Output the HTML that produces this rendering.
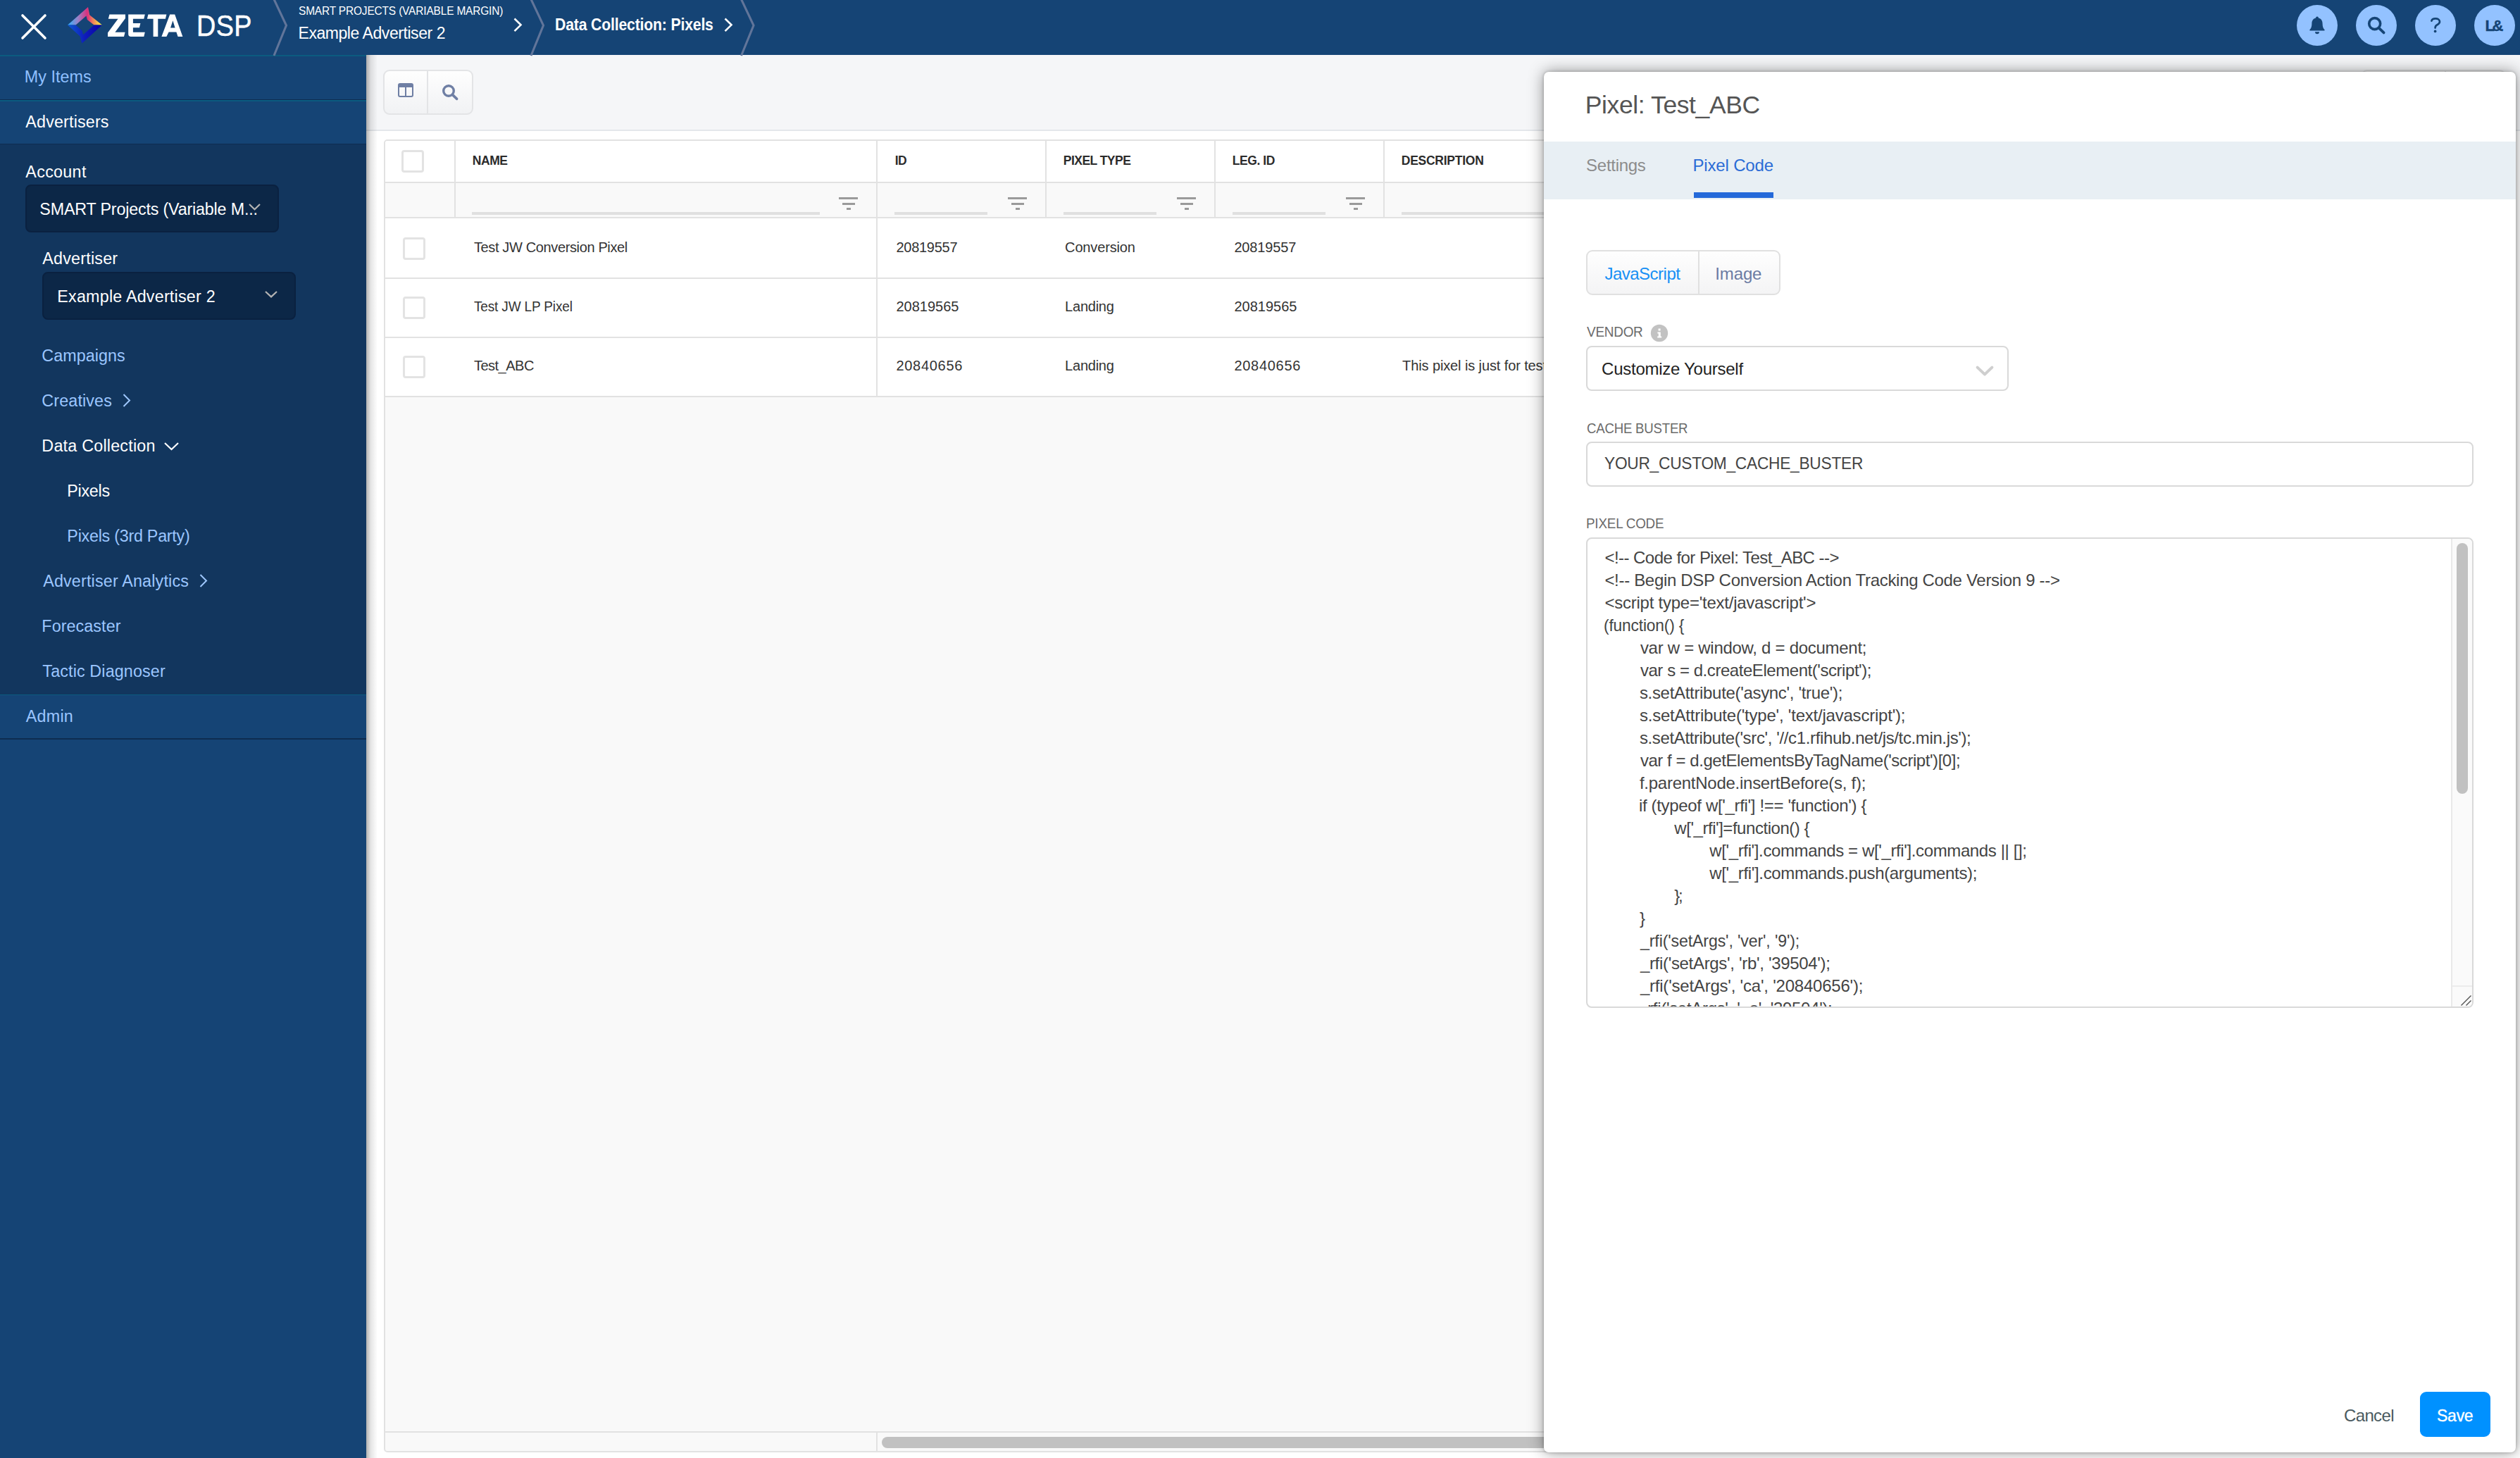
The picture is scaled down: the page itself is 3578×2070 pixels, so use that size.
<!DOCTYPE html>
<html><head><meta charset="utf-8"><title>Zeta DSP - Data Collection: Pixels</title>
<style>
html,body{margin:0;padding:0}
body{width:3578px;height:2070px;overflow:hidden;position:relative;background:#fff;font-family:"Liberation Sans",sans-serif}
.a{position:absolute}
.t{position:absolute;white-space:pre;line-height:40px;height:40px}
.b{font-weight:bold}
svg{position:absolute;overflow:visible}
/* header */
#hdr{left:0;top:0;width:3578px;height:78px;background:#154475}
.circ{width:58px;height:58px;border-radius:50%;background:#93c2ff;top:7px}
/* sidebar */
#sb{left:0;top:78px;width:520px;height:1992px;background:#154475}
#sbdark{left:0;top:205px;width:520px;height:781px;background:#12365e}
.teal{left:0;width:520px;height:2px;background:#0b5b80}
.dk{left:0;width:520px;height:1px;background:#0e2c50}
.sel{background:#0c2747;border:2px solid #0a2140;border-radius:8px;box-sizing:border-box}
/* main */
#main{left:520px;top:78px;width:3058px;height:1992px;background:#fff;overflow:hidden}
#tb{left:0;top:0;width:3058px;height:106px;background:#f5f6f8;border-bottom:2px solid #e4e7eb;box-sizing:content-box}
#sbshadow{left:0;top:0;width:16px;height:1992px;background:linear-gradient(90deg,rgba(0,0,0,.32),rgba(0,0,0,.12) 35%,rgba(0,0,0,0))}
.bg{border:2px solid #e3e4e6;border-radius:9px;box-sizing:border-box;background:linear-gradient(#fefefe,#f1f2f4)}
/* grid */
#grid{left:545px;top:198px;width:3010px;height:1864px;box-sizing:border-box;border:2px solid #e2e2e2;border-radius:5px;background:#f9f9f9;overflow:hidden}
.hl{background:#e2e2e2;height:2px;left:0;width:3010px}
.vl{background:#e2e2e2;width:2px}
.cb{width:32px;height:32px;box-sizing:border-box;border:3px solid #e3e3e3;border-radius:4px;background:#fff}
.fl{height:4px;background:#e0e0e0;top:101px}
.fi i{position:absolute;height:3px;background:#9a9a9a;display:block}
/* panel */
#panel{left:2192px;top:102px;width:1380px;height:1960px;background:#fff;border-radius:7px;box-shadow:0 0 22px rgba(0,0,0,.42),0 0 4px rgba(0,0,0,.25)}
#tabs{left:0;top:99px;width:1380px;height:82px;background:#e8eff4}
.inp{box-sizing:border-box;border:2px solid #d9d9d9;border-radius:8px;background:#fff}
</style></head><body>
<!-- MAIN CONTENT -->
<div id="main" class="a">
  <div id="tb" class="a"></div>
</div>
<div class="a bg" style="left:544px;top:99px;width:128px;height:64px"></div>
<div class="a" style="left:606px;top:101px;width:2px;height:60px;background:#e3e4e6"></div>
<svg style="left:565px;top:118px" width="22" height="20" viewBox="0 0 22 20"><path fill="#6f7fa4" fill-rule="evenodd" d="M3 0H19A3 3 0 0 1 22 3V17A3 3 0 0 1 19 20H3A3 3 0 0 1 0 17V3A3 3 0 0 1 3 0ZM2 6V17A1 1 0 0 0 3 18H10V6ZM12 6V18H19A1 1 0 0 0 20 17V6Z"/></svg>
<svg style="left:626px;top:118px" width="26" height="26" viewBox="0 0 26 26"><circle cx="11" cy="11" r="7.3" fill="none" stroke="#6f7fa4" stroke-width="3.4"/><path d="M16.6 16.6L22.6 22.4" stroke="#6f7fa4" stroke-width="3.6" stroke-linecap="round"/></svg>
<div class="a bg" style="left:3352px;top:99px;width:206px;height:64px"></div>
<div class="a" style="left:3471px;top:101px;width:2px;height:60px;background:#e3e4e6"></div>
<!-- GRID -->
<div id="grid" class="a">
  <div class="a" style="left:0;top:0;width:3010px;height:58px;background:#fff"></div>
  <div class="a hl" style="top:58px"></div>
  <div class="a" style="left:0;top:60px;width:3010px;height:48px;background:#f9f9f9"></div>
  <div class="a hl" style="top:108px"></div>
  <div class="a" style="left:0;top:110px;width:3010px;height:254px;background:#fff"></div>
  <div class="a hl" style="top:194px"></div>
  <div class="a hl" style="top:278px"></div>
  <div class="a hl" style="top:362px"></div>
  <div class="a hl" style="top:1832px"></div>
  <div class="a vl" style="left:98px;top:0;width:2px;height:108px"></div>
  <div class="a vl" style="left:697px;top:0;height:364px"></div><div class="a vl" style="left:697px;top:1834px;height:28px"></div>
  <div class="a vl" style="left:937px;top:0;height:108px"></div>
  <div class="a vl" style="left:1177px;top:0;height:108px"></div>
  <div class="a vl" style="left:1417px;top:0;height:108px"></div>
  <div class="a cb" style="left:23px;top:13px"></div>
  <div class="a cb" style="left:25px;top:137px"></div>
  <div class="a cb" style="left:25px;top:221px"></div>
  <div class="a cb" style="left:25px;top:305px"></div>
  <div class="a fl" style="left:123px;width:494px"></div>
  <div class="a fl" style="left:723px;width:132px"></div>
  <div class="a fl" style="left:963px;width:132px"></div>
  <div class="a fl" style="left:1203px;width:132px"></div>
  <div class="a fl" style="left:1443px;width:400px"></div>
  <div class="a fi" style="left:644px;top:80px"><i style="left:0;top:0;width:27px"></i><i style="left:4.5px;top:7.5px;width:18px"></i><i style="left:10.5px;top:15px;width:6px"></i></div>
  <div class="a fi" style="left:884px;top:80px"><i style="left:0;top:0;width:27px"></i><i style="left:4.5px;top:7.5px;width:18px"></i><i style="left:10.5px;top:15px;width:6px"></i></div>
  <div class="a fi" style="left:1124px;top:80px"><i style="left:0;top:0;width:27px"></i><i style="left:4.5px;top:7.5px;width:18px"></i><i style="left:10.5px;top:15px;width:6px"></i></div>
  <div class="a fi" style="left:1364px;top:80px"><i style="left:0;top:0;width:27px"></i><i style="left:4.5px;top:7.5px;width:18px"></i><i style="left:10.5px;top:15px;width:6px"></i></div>
  <div class="a" style="left:705px;top:1840px;width:1200px;height:16px;border-radius:8px;background:#c1c1c1"></div>
</div>
<span class="t" style="left:1991.10px;top:499.27px;font-size:20px;color:#333;letter-spacing:-0.111px">This pixel is just for testing</span>
<!-- SIDEBAR -->
<div id="sb" class="a"></div>
<div id="sbshadowwrap" class="a" style="left:520px;top:78px;width:16px;height:1992px;background:linear-gradient(90deg,rgba(0,0,0,.30),rgba(0,0,0,.10) 40%,rgba(0,0,0,0))"></div>
<div id="sbdark" class="a"></div>
<div class="a teal" style="top:78px"></div>
<div class="a dk" style="top:141px"></div>
<div class="a teal" style="top:142px"></div>
<div class="a dk" style="top:204px"></div>
<div class="a teal" style="top:986px;height:1px"></div>
<div class="a dk" style="top:1048px;height:2px"></div>
<div class="a sel" style="left:36px;top:262px;width:360px;height:68px"></div>
<div class="a sel" style="left:60px;top:386px;width:360px;height:68px"></div>
<svg style="left:353px;top:289px" width="17" height="10" viewBox="0 0 17 10"><path d="M1 1L8.5 8.2L16 1" fill="none" stroke="#b4b4b4" stroke-width="2.2"/></svg>
<svg style="left:376px;top:413px" width="18" height="10" viewBox="0 0 18 10"><path d="M1 1L9 8.4L17 1" fill="none" stroke="#b4b4b4" stroke-width="2.2"/></svg>
<svg style="left:174px;top:559px" width="12" height="19" viewBox="0 0 12 19"><path d="M1.5 1L10 9.5L1.5 18" fill="none" stroke="#9fc8ff" stroke-width="2"/></svg>
<svg style="left:283px;top:815px" width="12" height="19" viewBox="0 0 12 19"><path d="M1.5 1L10 9.5L1.5 18" fill="none" stroke="#9fc8ff" stroke-width="2"/></svg>
<svg style="left:233px;top:628px" width="21" height="12" viewBox="0 0 21 12"><path d="M1 1L10.5 10L20 1" fill="none" stroke="#fff" stroke-width="2.2"/></svg>
<!-- HEADER -->
<div id="hdr" class="a"></div>
<svg style="left:0;top:0" width="1100" height="78" viewBox="0 0 1100 78">
  <path d="M32 22L64 54M64 22L32 54" stroke="#fff" stroke-width="3.6" stroke-linecap="round"/>
  <defs>
    <linearGradient id="g1" x1="96" y1="0" x2="145" y2="0" gradientUnits="userSpaceOnUse"><stop offset="0" stop-color="#2fb2ff"/><stop offset=".3" stop-color="#9a82c8"/><stop offset=".57" stop-color="#d9307e"/><stop offset=".72" stop-color="#ee7a5c"/><stop offset="1" stop-color="#ffff3c"/></linearGradient>
    <linearGradient id="g2" x1="96" y1="0" x2="145" y2="0" gradientUnits="userSpaceOnUse"><stop offset="0" stop-color="#0e5ad2"/><stop offset=".5" stop-color="#0f1cba"/><stop offset="1" stop-color="#0a00a6"/></linearGradient>
  </defs>
  <path fill="url(#g1)" d="M96 35.6L125 10L127.2 21.2L145 35.6H133.6L123.9 27.9L122.5 22.5L107.5 35.6Z"/>
  <path fill="url(#g2)" d="M96 35.4L113.6 51.4L116.4 61.4L145 35.4H133.6L118.2 49.3L116.4 43.6L107.5 35.4Z"/>
  <g fill="#fff">
    <path d="M155.4 20.4H178V26L163.4 45.7H177.6L176 52.1H153V46.4L167.6 26.8H153.8Z"/>
    <path d="M182.2 20.4H205.8L204.3 26.8H188.9V33.1H199.4L197.9 39.3H188.9V45.7H205.8L204.3 52.1H186A3.8 3.8 0 0 1 182.2 48.3Z"/>
    <path d="M210.4 20.4H236.4L234.9 26.8H224.3V52.1H217.6V26.8H208.9Z"/>
    <path d="M241.2 20.4H248.2L259.4 52.1H252.6L250.4 45.4H239.6L236.4 52.1H229.4ZM242.1 39.4H248.6L245.4 29.2Z"/>
  </g>
  <g fill="none" stroke="#61759a" stroke-width="3.1">
    <path d="M389 -1L406.5 36L389 79"/>
    <path d="M754 -1L771.5 36L754 79"/>
    <path d="M1052.5 -1L1070 36L1052.5 79"/>
  </g>
  <path d="M730.5 26.5L739.5 35.3L730.5 44.2" fill="none" stroke="#fff" stroke-width="2.6"/>
  <path d="M1029.5 26.5L1038.5 35.3L1029.5 44.2" fill="none" stroke="#fff" stroke-width="2.6"/>
</svg>
<div class="a circ" style="left:3261px"></div>
<div class="a circ" style="left:3345px"></div>
<div class="a circ" style="left:3429px"></div>
<div class="a circ" style="left:3513px"></div>
<svg style="left:3279px;top:23px" width="22" height="26" viewBox="0 0 22 26"><path fill="#154475" d="M11 0.6A1.9 1.9 0 0 1 12.9 2.6C16.6 3.5 18.6 6.6 18.6 10.4C18.6 14.4 19.4 17 21.4 18.9C22 19.6 21.6 20.6 20.6 20.6H1.4C0.4 20.6 0 19.6 0.6 18.9C2.6 17 3.4 14.4 3.4 10.4C3.4 6.6 5.4 3.5 9.1 2.6A1.9 1.9 0 0 1 11 0.6ZM8 22.2H14A3 3 0 0 1 8 22.2Z"/></svg>
<svg style="left:3360px;top:22px" width="28" height="28" viewBox="0 0 28 28"><circle cx="11.7" cy="11.6" r="8" fill="none" stroke="#154475" stroke-width="3.6"/><path d="M17.8 17.8L24.6 24.4" stroke="#154475" stroke-width="3.8" stroke-linecap="round"/></svg>
<svg style="left:3449px;top:24px" width="20" height="24" viewBox="0 0 20 24"><path d="M3.4 5.6C4 3.4 6.2 2.4 9 2.4C12.4 2.4 15 4 15 6.8C15 9.2 13.4 10.2 11.4 11.2C9.6 12.1 8.6 13.2 8.6 15.6" fill="none" stroke="#154475" stroke-width="2.7" stroke-linecap="round"/><circle cx="8.6" cy="20.4" r="1.9" fill="#154475"/></svg>
<!-- PANEL -->
<div id="panel" class="a">
  <div id="tabs" class="a"></div>
  <div class="a" style="left:213px;top:171px;width:113px;height:8px;background:#2469d9"></div>
  <div class="a bg" style="left:60px;top:253px;width:276px;height:64px;background:linear-gradient(#fefefe,#f4f4f5);border-color:#e0e0e0"></div>
  <div class="a" style="left:219px;top:255px;width:2px;height:60px;background:#e0e0e0"></div>
  <div class="a inp" style="left:60px;top:389px;width:600px;height:64px"></div>
  <div class="a inp" style="left:60px;top:525px;width:1260px;height:64px"></div>
  <div class="a inp" style="left:60px;top:661px;width:1260px;height:668px"></div>
  <div class="a" style="left:1288px;top:663px;width:30px;height:664px;background:#fafafa;border-left:2px solid #e9e9e9;box-sizing:border-box;border-radius:0 6px 6px 0"></div>
  <div class="a" style="left:1296px;top:669px;width:16px;height:356px;border-radius:8px;background:#c1c1c1"></div>
  <div class="a" style="left:1290px;top:1297px;width:28px;height:2px;background:#ececec"></div>
  <div class="a" style="left:1244px;top:1874px;width:100px;height:64px;border-radius:9px;background:#0091ff"></div>
</div>
<svg style="left:2343px;top:460px" width="26" height="26" viewBox="0 0 26 26"><circle cx="13" cy="13" r="12.2" fill="#c2c2c2"/><path fill="#fff" d="M11.6 6.6H14.6V9.4H11.6ZM10.4 11.4H14.8V17.6H16.2V19.6H10.2V17.6H11.8V13.4H10.4Z"/></svg>
<svg style="left:2805px;top:519px" width="26" height="16" viewBox="0 0 26 16"><path d="M2.5 2.5L13 12.5L23.5 2.5" fill="none" stroke="#cfcfcf" stroke-width="3.8" stroke-linecap="round" stroke-linejoin="round"/></svg>
<svg style="left:3492px;top:1411px" width="18" height="18" viewBox="0 0 18 18"><path d="M2.5 16.5L16.5 2.5M9.5 16.5L16.5 9.5" stroke="#505050" stroke-width="1.4"/></svg>
<span class="t" style="left:278.89px;top:16.40px;font-size:43px;color:#fff;letter-spacing:0.395px;transform:scaleX(0.88);transform-origin:0 0;-webkit-text-stroke:0.5px #fff">DSP</span>
<span class="t" style="left:423.95px;top:-5.12px;font-size:16.5px;color:#fff;letter-spacing:-0.162px;transform:scaleX(0.9356588763740682);transform-origin:0 0">SMART PROJECTS (VARIABLE MARGIN)</span>
<span class="t" style="left:423.49px;top:26.93px;font-size:23px;color:#fff;letter-spacing:-0.440px">Example Advertiser 2</span>
<span class="t b" style="left:788.39px;top:15.43px;font-size:23px;color:#fff;letter-spacing:-0.182px;transform:scaleX(0.9218773224752057);transform-origin:0 0">Data Collection: Pixels</span>
<span class="t b" style="left:3528.46px;top:17.28px;font-size:22px;color:#154475;letter-spacing:-3.348px;-webkit-text-stroke:0.4px #154475">L&amp;</span>
<span class="t" style="left:34.77px;top:88.93px;font-size:23.3px;color:#8fc0ff;letter-spacing:0.045px">My Items</span>
<span class="t" style="left:36.37px;top:152.93px;font-size:23.3px;color:#fff;letter-spacing:0.157px">Advertisers</span>
<span class="t" style="left:36.37px;top:223.73px;font-size:23.3px;color:#fff;letter-spacing:0.302px">Account</span>
<span class="t" style="left:56.37px;top:276.93px;font-size:23.3px;color:#fff;letter-spacing:-0.179px">SMART Projects (Variable M...</span>
<span class="t" style="left:60.37px;top:347.23px;font-size:23.3px;color:#fff;letter-spacing:0.202px">Advertiser</span>
<span class="t" style="left:81.27px;top:401.23px;font-size:23.3px;color:#fff;letter-spacing:0.224px">Example Advertiser 2</span>
<span class="t" style="left:59.37px;top:484.93px;font-size:23.3px;color:#9cc6ff;letter-spacing:0.044px">Campaigns</span>
<span class="t" style="left:59.37px;top:548.93px;font-size:23.3px;color:#9cc6ff;letter-spacing:0.136px">Creatives</span>
<span class="t" style="left:59.37px;top:612.93px;font-size:23.3px;color:#fff;letter-spacing:0.222px">Data Collection</span>
<span class="t" style="left:95.37px;top:676.93px;font-size:23.3px;color:#fff;letter-spacing:-0.292px">Pixels</span>
<span class="t" style="left:95.37px;top:740.93px;font-size:23.3px;color:#9cc6ff;letter-spacing:-0.251px">Pixels (3rd Party)</span>
<span class="t" style="left:61.17px;top:804.93px;font-size:23.3px;color:#9cc6ff;letter-spacing:0.185px">Advertiser Analytics</span>
<span class="t" style="left:59.37px;top:868.93px;font-size:23.3px;color:#9cc6ff;letter-spacing:0.084px">Forecaster</span>
<span class="t" style="left:60.37px;top:932.93px;font-size:23.3px;color:#9cc6ff;letter-spacing:0.139px">Tactic Diagnoser</span>
<span class="t" style="left:36.77px;top:996.93px;font-size:23.3px;color:#9cc6ff;letter-spacing:0.238px">Admin</span>
<span class="t b" style="left:670.68px;top:208.34px;font-size:17.5px;color:#2b2b2b;letter-spacing:-0.385px">NAME</span>
<span class="t b" style="left:1270.68px;top:208.34px;font-size:17.5px;color:#2b2b2b;letter-spacing:-0.625px">ID</span>
<span class="t b" style="left:1509.78px;top:208.34px;font-size:17.5px;color:#2b2b2b;letter-spacing:-0.528px">PIXEL TYPE</span>
<span class="t b" style="left:1749.78px;top:208.34px;font-size:17.5px;color:#2b2b2b;letter-spacing:-0.438px">LEG. ID</span>
<span class="t b" style="left:1989.78px;top:208.34px;font-size:17.5px;color:#2b2b2b;letter-spacing:-0.253px">DESCRIPTION</span>
<span class="t" style="left:672.90px;top:331.27px;font-size:20px;color:#333;letter-spacing:-0.363px">Test JW Conversion Pixel</span>
<span class="t" style="left:1272.40px;top:331.27px;font-size:20px;color:#333;letter-spacing:-0.255px">20819557</span>
<span class="t" style="left:1512.10px;top:331.27px;font-size:20px;color:#333;letter-spacing:-0.152px">Conversion</span>
<span class="t" style="left:1752.40px;top:331.27px;font-size:20px;color:#333;letter-spacing:-0.141px">20819557</span>
<span class="t" style="left:672.90px;top:415.27px;font-size:20px;color:#333;letter-spacing:-0.156px;transform:scaleX(0.9494941256022326);transform-origin:0 0">Test JW LP Pixel</span>
<span class="t" style="left:1272.40px;top:415.27px;font-size:20px;color:#333;letter-spacing:0.002px">20819565</span>
<span class="t" style="left:1512.10px;top:415.27px;font-size:20px;color:#333;letter-spacing:-0.231px">Landing</span>
<span class="t" style="left:1752.40px;top:415.27px;font-size:20px;color:#333;letter-spacing:0.002px">20819565</span>
<span class="t" style="left:672.90px;top:499.27px;font-size:20px;color:#333;letter-spacing:-0.491px">Test_ABC</span>
<span class="t" style="left:1272.40px;top:499.27px;font-size:20px;color:#333;letter-spacing:0.717px">20840656</span>
<span class="t" style="left:1512.10px;top:499.27px;font-size:20px;color:#333;letter-spacing:-0.231px">Landing</span>
<span class="t" style="left:1752.40px;top:499.27px;font-size:20px;color:#333;letter-spacing:0.717px">20840656</span>
<span class="t" style="left:2250.82px;top:128.80px;font-size:35.5px;color:#555;letter-spacing:-0.399px">Pixel: Test_ABC</span>
<span class="t" style="left:2252.12px;top:214.98px;font-size:24px;color:#8c8c8c;letter-spacing:-0.280px">Settings</span>
<span class="t" style="left:2403.52px;top:214.98px;font-size:24px;color:#2b6cd6;letter-spacing:-0.167px">Pixel Code</span>
<span class="t" style="left:2278.42px;top:369.08px;font-size:24px;color:#1890f5;letter-spacing:-0.499px">JavaScript</span>
<span class="t" style="left:2435.32px;top:369.08px;font-size:24px;color:#6b7ba3;letter-spacing:-0.136px">Image</span>
<span class="t" style="left:2252.68px;top:451.37px;font-size:20.3px;color:#6b6b6b;letter-spacing:-0.273px;transform:scaleX(0.9343183389883154);transform-origin:0 0">VENDOR</span>
<span class="t" style="left:2274.12px;top:503.98px;font-size:24px;color:#222;letter-spacing:-0.264px">Customize Yourself</span>
<span class="t" style="left:2252.68px;top:587.77px;font-size:20.3px;color:#6b6b6b;letter-spacing:-0.233px;transform:scaleX(0.9183656577810164);transform-origin:0 0">CACHE BUSTER</span>
<span class="t" style="left:2278.42px;top:637.98px;font-size:24px;color:#444;letter-spacing:-0.270px;transform:scaleX(0.9465253632196594);transform-origin:0 0">YOUR_CUSTOM_CACHE_BUSTER</span>
<span class="t" style="left:2251.68px;top:723.47px;font-size:20.3px;color:#6b6b6b;letter-spacing:-0.214px;transform:scaleX(0.9289174138402992);transform-origin:0 0">PIXEL CODE</span>
<span class="t" style="left:3328.02px;top:1989.78px;font-size:24px;color:#4a5a60;letter-spacing:-0.652px">Cancel</span>
<span class="t" style="left:3459.82px;top:1989.78px;font-size:24px;color:#fff;letter-spacing:-0.274px;transform:scaleX(0.9589864872902263);transform-origin:0 0;-webkit-text-stroke:0.35px #fff">Save</span>
<div class="a" style="left:0;top:0;width:3578px;height:1429px;overflow:hidden"><span class="t" style="left:2278.42px;top:772.18px;font-size:24px;color:#444;letter-spacing:-0.541px">&lt;!-- Code for Pixel: Test_ABC --&gt;</span>
<span class="t" style="left:2278.42px;top:804.18px;font-size:24px;color:#444;letter-spacing:-0.317px">&lt;!-- Begin DSP Conversion Action Tracking Code Version 9 --&gt;</span>
<span class="t" style="left:2278.42px;top:836.18px;font-size:24px;color:#444;letter-spacing:-0.242px">&lt;script type='text/javascript'&gt;</span>
<span class="t" style="left:2277.42px;top:868.18px;font-size:24px;color:#444;letter-spacing:-0.159px;transform:scaleX(0.9473255259365142);transform-origin:0 0">(function() {</span>
<span class="t" style="left:2328.92px;top:900.18px;font-size:24px;color:#444;letter-spacing:-0.284px">var w = window, d = document;</span>
<span class="t" style="left:2328.92px;top:932.18px;font-size:24px;color:#444;letter-spacing:-0.446px">var s = d.createElement('script');</span>
<span class="t" style="left:2327.92px;top:964.18px;font-size:24px;color:#444;letter-spacing:-0.319px">s.setAttribute('async', 'true');</span>
<span class="t" style="left:2327.92px;top:996.18px;font-size:24px;color:#444;letter-spacing:-0.217px">s.setAttribute('type', 'text/javascript');</span>
<span class="t" style="left:2327.92px;top:1028.18px;font-size:24px;color:#444;letter-spacing:-0.370px">s.setAttribute('src', '//c1.rfihub.net/js/tc.min.js');</span>
<span class="t" style="left:2328.92px;top:1060.18px;font-size:24px;color:#444;letter-spacing:-0.448px">var f = d.getElementsByTagName('script')[0];</span>
<span class="t" style="left:2327.92px;top:1092.18px;font-size:24px;color:#444;letter-spacing:-0.259px">f.parentNode.insertBefore(s, f);</span>
<span class="t" style="left:2326.92px;top:1124.18px;font-size:24px;color:#444;letter-spacing:-0.331px">if (typeof w['_rfi'] !== 'function') {</span>
<span class="t" style="left:2377.32px;top:1156.18px;font-size:24px;color:#444;letter-spacing:-0.460px">w['_rfi']=function() {</span>
<span class="t" style="left:2427.32px;top:1188.18px;font-size:24px;color:#444;letter-spacing:-0.376px">w['_rfi'].commands = w['_rfi'].commands || [];</span>
<span class="t" style="left:2427.32px;top:1220.18px;font-size:24px;color:#444;letter-spacing:-0.350px">w['_rfi'].commands.push(arguments);</span>
<span class="t" style="left:2377.32px;top:1252.18px;font-size:24px;color:#444;letter-spacing:-2.427px">};</span>
<span class="t" style="left:2327.92px;top:1284.18px;font-size:24px;color:#444;letter-spacing:0.000px">}</span>
<span class="t" style="left:2328.92px;top:1316.18px;font-size:24px;color:#444;letter-spacing:-0.136px;transform:scaleX(0.9647635652141654);transform-origin:0 0">_rfi('setArgs', 'ver', '9');</span>
<span class="t" style="left:2328.92px;top:1348.18px;font-size:24px;color:#444;letter-spacing:-0.318px">_rfi('setArgs', 'rb', '39504');</span>
<span class="t" style="left:2328.92px;top:1380.18px;font-size:24px;color:#444;letter-spacing:-0.218px">_rfi('setArgs', 'ca', '20840656');</span>
<span class="t" style="left:2326.12px;top:1412.18px;font-size:24px;color:#444;letter-spacing:-0.310px">_rfi('setArgs', '_o', '39504');</span></div>
</body></html>
